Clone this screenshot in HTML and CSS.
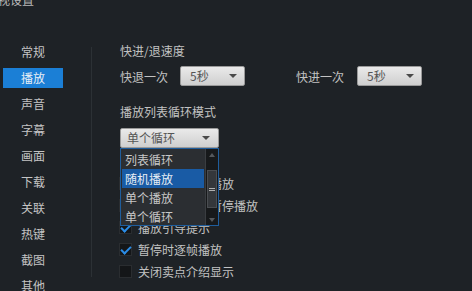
FILE: index.html
```html
<!DOCTYPE html>
<html lang="zh">
<head>
<meta charset="utf-8">
<title>播放设置</title>
<link rel="stylesheet" href="styles.css">
</head>
<body>
<div class="page">
  <div class="title">视设置</div>
  <div class="layout">
    <nav class="sidebar">
      <div class="nav-item"><span>常规</span></div>
      <div class="nav-item active"><span>播放</span></div>
      <div class="nav-item"><span>声音</span></div>
      <div class="nav-item"><span>字幕</span></div>
      <div class="nav-item"><span>画面</span></div>
      <div class="nav-item"><span>下载</span></div>
      <div class="nav-item"><span>关联</span></div>
      <div class="nav-item"><span>热键</span></div>
      <div class="nav-item"><span>截图</span></div>
      <div class="nav-item"><span>其他</span></div>
    </nav>
    <div class="divider"></div>
    <main class="content">
      <div class="heading first">快进/退速度</div>
      <div class="speed-row">
        <span class="label">快退一次</span>
        <div class="select small"><span>5秒</span><i class="arrow"></i></div>
        <span class="label second">快进一次</span>
        <div class="select small"><span>5秒</span><i class="arrow"></i></div>
      </div>
      <div class="heading second-h">播放列表循环模式</div>
      <div class="mode-wrap">
        <div class="select wide"><span>单个循环</span><i class="arrow"></i></div>
        <div class="dropdown">
          <ul class="options">
            <li>列表循环</li>
            <li class="hl">随机播放</li>
            <li>单个播放</li>
            <li>单个循环</li>
          </ul>
          <div class="scrollbar">
            <div class="sb-btn up"><i></i></div>
            <div class="sb-track">
              <div class="sb-thumb"><b></b></div>
            </div>
            <div class="sb-btn down"><i></i></div>
          </div>
        </div>
      </div>
      <div class="checks">
        <div class="check-row"><span class="box"></span><span>打开文件自动播放</span></div>
        <div class="check-row"><span class="box"></span><span>最小化时自动暂停播放</span></div>
        <div class="check-row"><span class="box on"></span><span>播放引导提示</span></div>
        <div class="check-row"><span class="box on"></span><span>暂停时逐帧播放</span></div>
        <div class="check-row"><span class="box"></span><span>关闭卖点介绍显示</span></div>
      </div>
    </main>
  </div>
</div>
</body>
</html>
```
FILE: styles.css
```css
* { box-sizing: border-box; }
html, body {
  margin: 0;
  padding: 0;
  background: #1e2226;
}
body {
  width: 472px;
  height: 291px;
  overflow: hidden;
  font-family: "Noto Sans CJK SC", "Noto Sans", sans-serif;
  font-size: 12px;
  color: #c2c2c2;
}
.page {
  position: relative;
  height: 291px;
}
.title {
  height: 16px;
  line-height: 16px;
  margin-top: -8px;
  margin-left: -2px;
  color: #b8b8b8;
  font-size: 12px;
}
.layout {
  display: flex;
}
.sidebar {
  width: 91px;
  padding-left: 3px;
  padding-top: 31px;
  flex: none;
}
.nav-item {
  width: 60px;
  height: 26px;
  display: flex;
  align-items: center;
}
.nav-item span {
  display: block;
  width: 60px;
  height: 20px;
  line-height: 20px;
  text-align: center;
  color: #c4c4c4;
}
.nav-item.active span {
  background: #1b7fd6;
  color: #e8eef5;
}
.divider {
  width: 1px;
  flex: none;
  margin-top: 39px;
  height: 230px;
  background: #2c3135;
}
.content {
  padding-left: 28px;
  padding-top: 35px;
  flex: 1;
  position: relative;
}
.heading {
  line-height: 16px;
  height: 16px;
}
.speed-row {
  display: flex;
  align-items: center;
  height: 20px;
  margin-top: 7px;
}
.label {
  width: 60px;
  flex: none;
}
.label.second {
  margin-left: 51px;
  width: 61px;
}
.select {
  position: relative;
  height: 20px;
  border-radius: 2px;
  border: 1px solid #9a9a9a;
  background: linear-gradient(#eaeaea, #cfcfcf);
  color: #555;
  line-height: 18px;
  flex: none;
}
.select.small {
  width: 65px;
  padding-left: 9px;
}
.select.wide {
  width: 99px;
  padding-left: 6px;
}
.arrow {
  position: absolute;
  right: 7px;
  top: 7px;
  width: 0;
  height: 0;
  border-left: 4px solid transparent;
  border-right: 4px solid transparent;
  border-top: 4px solid #4a4a4a;
}
.select.wide .arrow { right: 8px; }
.heading.second-h {
  margin-top: 18px;
}
.mode-wrap {
  position: relative;
  margin-top: 8px;
  height: 20px;
}
.dropdown {
  position: absolute;
  left: 0;
  top: 20px;
  width: 99px;
  height: 78px;
  background: #2b2e32;
  border: 1px solid #1f5d9c;
  display: flex;
  z-index: 5;
}
.options {
  list-style: none;
  margin: 0;
  padding: 1px 1px 0 1px;
  flex: 1;
}
.options li {
  height: 19px;
  line-height: 19px;
  padding-left: 3px;
  color: #c8c8c8;
}
.options li.hl {
  background: #195ba5;
  color: #e6edf5;
}
.scrollbar {
  width: 13px;
  flex: none;
  display: flex;
  flex-direction: column;
  background: #17191b;
  border-left: 1px solid #3a3d41;
}
.sb-btn {
  height: 11px;
  display: flex;
  align-items: center;
  justify-content: center;
}
.sb-btn i {
  width: 0;
  height: 0;
  border-left: 3px solid transparent;
  border-right: 3px solid transparent;
}
.sb-btn.up i { border-bottom: 4px solid #55585c; }
.sb-btn.down i { border-top: 4px solid #55585c; }
.sb-track {
  flex: 1;
  padding-top: 10px;
  padding-bottom: 5px;
}
.sb-thumb {
  height: 38px;
  margin: 0 1px;
  background: #34373b;
  border: 1px solid #4a4d51;
  display: flex;
  align-items: center;
  justify-content: center;
}
.sb-thumb b {
  display: block;
  width: 6px;
  height: 3px;
  border-top: 1px solid #b0b0b0;
  border-bottom: 1px solid #b0b0b0;
}
.checks {
  margin-top: 24px;
  margin-left: -1px;
}
.check-row {
  display: flex;
  align-items: center;
  height: 22px;
}
.box {
  width: 13px;
  height: 13px;
  margin-right: 6px;
  background: #141618;
  border: 1px solid #2a2d30;
  position: relative;
  flex: none;
}
.box.on::after {
  content: "";
  position: absolute;
  left: 3px;
  top: 0px;
  width: 4px;
  height: 8px;
  border-right: 2px solid #2b8ce6;
  border-bottom: 2px solid #2b8ce6;
  transform: rotate(45deg);
}
```
